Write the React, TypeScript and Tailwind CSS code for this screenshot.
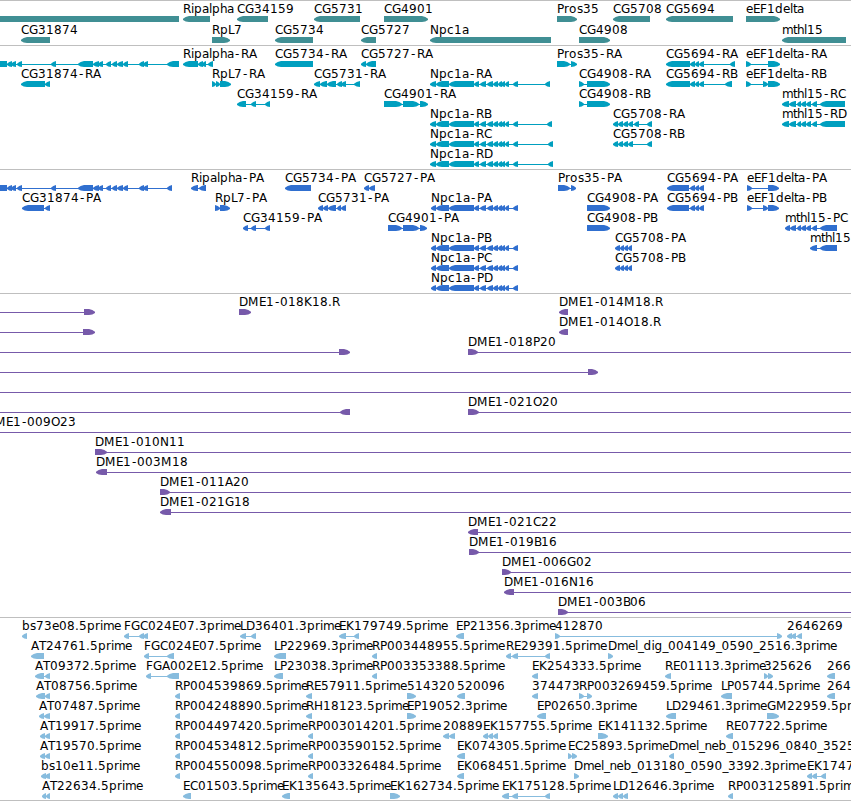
type Segment = [number, number];

interface Feature {
    row: number;
    dir: "L" | "R";
    name: string;
    exons: Segment[];
    // intron line, when it runs past the outermost exons
    line?: Segment;
}

interface Track {
    id: string;
    height: number;
    pitch: number;
    color: string;
    features: Feature[];
}

const WIDTH = 851;

const f = (row: number, dir: "L" | "R", name: string, exons: Segment[], line?: Segment): Feature => ({
    row,
    dir,
    name,
    exons,
    line,
});

// Pixel advances of the label font, digits are 8
const ADVANCE: Record<string, number> = {
    A: 8, B: 7, C: 8, D: 9, E: 7, F: 7, G: 9, H: 9, K: 8, L: 6, M: 11, N: 9, O: 9, P: 7, R: 8, T: 7,
    a: 7, b: 8, c: 7, d: 8, e: 7, g: 8, h: 7, i: 3, l: 3, m: 11, n: 7, o: 8, p: 8, r: 5, s: 6, t: 4,
    "-": 6, ".": 4, _: 5.5,
};

const genes: Feature[] = [
    f(0, "L", "", [[-10, 179]]),
    f(0, "L", "Ripalpha", [[183, 210]]),
    f(0, "L", "CG34159", [[237, 268]]),
    f(0, "L", "CG5731", [[314, 360]]),
    f(0, "R", "CG4901", [[384, 428]]),
    f(0, "R", "Pros35", [[557, 577]]),
    f(0, "L", "CG5708", [[613, 650]]),
    f(0, "L", "CG5694", [[666, 733]]),
    f(0, "R", "eEF1delta", [[746, 780]]),
    f(1, "L", "CG31874", [[21, 50]]),
    f(1, "R", "RpL7", [[212, 230]]),
    f(1, "L", "CG5734", [[275, 313]]),
    f(1, "L", "CG5727", [[361, 376]]),
    f(1, "L", "Npc1a", [[430, 551]]),
    f(1, "R", "CG4908", [[579, 610]]),
    f(1, "L", "mthl15", [[782, 846]]),
];

const leftExons: Segment[] = [
    [-8, 7], [7, 12], [11, 16], [17, 22], [51, 56], [78, 93], [93, 99], [98, 103],
    [106, 111], [112, 117], [117, 123], [123, 128], [139, 144], [143, 148],
];
const npcExons: Segment[] = [
    [436, 449], [449, 474], [474, 479], [480, 486], [487, 493], [493, 498], [498, 502], [501, 505], [505, 509], [513, 518],
];
const cg5708Exons: Segment[] = [[613, 618], [618, 623], [623, 628], [628, 633]];
const mthlExons: Segment[] = [[797, 801], [801, 806], [806, 811], [812, 817]];

const transcripts: Feature[] = [
    f(0, "L", "", [...leftExons, [167, 179]]),
    f(0, "L", "Ripalpha-RA", [[183, 198], [198, 203], [202, 206], [208, 213]]),
    f(0, "L", "CG5734-RA", [[275, 313]]),
    f(0, "L", "CG5727-RA", [[361, 366], [366, 376]]),
    f(0, "R", "Pros35-RA", [[557, 570], [571, 577]]),
    f(0, "L", "CG5694-RA", [[666, 690], [690, 695], [695, 699], [699, 704], [730, 735]]),
    f(0, "R", "eEF1delta-RA", [[746, 751], [768, 780]]),
    f(1, "L", "CG31874-RA", [[21, 45], [45, 50]]),
    f(1, "R", "RpL7-RA", [[212, 216], [216, 220], [220, 231]]),
    f(1, "L", "CG5731-RA", [[314, 320], [320, 327], [327, 336], [337, 342], [341, 346], [354, 360]]),
    f(1, "L", "Npc1a-RA", [[430, 436], ...npcExons, [545, 550]]),
    f(1, "R", "CG4908-RA", [[579, 584], [587, 610]]),
    f(1, "L", "CG5694-RB", [[666, 690], [690, 695], [695, 699], [699, 704], [725, 732]]),
    f(1, "R", "eEF1delta-RB", [[746, 751], [763, 768], [768, 780]]),
    f(2, "L", "CG34159-RA", [[237, 246], [251, 256], [265, 270]]),
    f(2, "R", "CG4901-RA", [[384, 402], [403, 419], [420, 428]]),
    f(2, "R", "CG4908-RB", [[579, 584], [587, 610]]),
    f(2, "L", "mthl15-RC", [[782, 789], [789, 796], ...mthlExons, [820, 845]]),
    f(3, "L", "Npc1a-RB", [[430, 436], ...npcExons, [547, 552]]),
    f(3, "L", "CG5708-RA", [...cg5708Exons, [634, 639], [647, 652]]),
    f(3, "L", "mthl15-RD", [[782, 789], [789, 796], ...mthlExons, [820, 845]]),
    f(4, "L", "Npc1a-RC", [[430, 436], ...npcExons, [548, 553]]),
    f(4, "L", "CG5708-RB", [...cg5708Exons, [647, 652]]),
    f(5, "L", "Npc1a-RD", [[430, 436], ...npcExons, [548, 553]]),
];

const proteins: Feature[] = [
    f(0, "L", "", [...leftExons, [167, 172]]),
    f(0, "L", "Ripalpha-PA", [[191, 198], [199, 206]]),
    f(0, "L", "CG5734-PA", [[285, 311]]),
    f(0, "L", "CG5727-PA", [[364, 369], [369, 375]]),
    f(0, "R", "Pros35-PA", [[558, 570], [571, 576]]),
    f(0, "L", "CG5694-PA", [[667, 689], [690, 695], [695, 699], [699, 704]]),
    f(0, "R", "eEF1delta-PA", [[747, 752], [768, 779]]),
    f(1, "L", "CG31874-PA", [[22, 44], [45, 50]]),
    f(1, "R", "RpL7-PA", [[215, 220], [220, 230]]),
    f(1, "L", "CG5731-PA", [[318, 323], [323, 328], [328, 336], [337, 341], [341, 346]]),
    f(1, "L", "Npc1a-PA", [[431, 436], ...npcExons]),
    f(1, "R", "CG4908-PA", [[587, 610]]),
    f(1, "L", "CG5694-PB", [[667, 689], [690, 695], [695, 699], [699, 704]]),
    f(1, "R", "eEF1delta-PB", [[747, 752], [763, 768], [768, 779]]),
    f(2, "L", "CG34159-PA", [[243, 248], [251, 256], [265, 270]]),
    f(2, "R", "CG4901-PA", [[388, 402], [403, 419], [420, 427]]),
    f(2, "R", "CG4908-PB", [[587, 610]]),
    f(2, "L", "mthl15-PC", [[785, 790], [790, 796], ...mthlExons, [820, 837]]),
    f(3, "L", "Npc1a-PB", [[431, 436], ...npcExons]),
    f(3, "L", "CG5708-PA", [[615, 620], [620, 624], [624, 628], [628, 632]]),
    f(3, "L", "mthl15", [[810, 817], [820, 837]]),
    f(4, "L", "Npc1a-PC", [[431, 436], ...npcExons]),
    f(4, "L", "CG5708-PB", [[615, 620], [620, 624], [624, 628], [628, 632]]),
    f(5, "L", "Npc1a-PD", [[431, 436], ...npcExons]),
];

const clones: Feature[] = [
    f(0, "R", "", [[84, 95]], [0, 84]),
    f(0, "R", "DME1-018K18.R", [[239, 251]]),
    f(0, "L", "DME1-014M18.R", [[559, 568]]),
    f(1, "R", "", [[83, 95]], [0, 84]),
    f(1, "L", "DME1-014O18.R", [[559, 568]]),
    f(2, "R", "", [[339, 350]], [0, 340]),
    f(2, "R", "DME1-018P20", [[468, 478]], [470, WIDTH]),
    f(3, "R", "", [[588, 598]], [0, 590]),
    f(4, "R", "", [], [0, WIDTH]),
    f(5, "L", "", [[340, 350]], [0, 342]),
    f(5, "R", "DME1-021O20", [[468, 479]], [470, WIDTH]),
    f(6, "L", "DME1-009O23", [[-14, -4]], [-4, WIDTH]),
    f(7, "R", "DME1-010N11", [[95, 107]], [96, WIDTH]),
    f(8, "L", "DME1-003M18", [[96, 107]], [98, WIDTH]),
    f(9, "R", "DME1-011A20", [[160, 170]], [162, WIDTH]),
    f(10, "L", "DME1-021G18", [[160, 171]], [162, WIDTH]),
    f(11, "L", "DME1-021C22", [[468, 478]], [470, WIDTH]),
    f(12, "R", "DME1-019B16", [[469, 479]], [470, WIDTH]),
    f(13, "R", "DME1-006G02", [[502, 511]], [504, WIDTH]),
    f(14, "L", "DME1-016N16", [[504, 514]], [506, WIDTH]),
    f(15, "R", "DME1-003B06", [[558, 568]], [560, WIDTH]),
];

const ests: Feature[] = [
    f(0, "L", "bs73e08.5prime", [[22, 27]]),
    f(0, "L", "FGC024E07.3prime", [[124, 129], [139, 144], [143, 148]]),
    f(0, "L", "LD36401.3prime", [[240, 246], [251, 256]]),
    f(0, "L", "EK179749.5prime", [[339, 346], [354, 359]]),
    f(0, "L", "EP21356.3prime", [[456, 464]]),
    f(0, "R", "412870", [[555, 560], [777, 782]]),
    f(0, "L", "2646269", [[787, 792], [791, 796], [797, 802]]),
    f(1, "L", "AT24761.5prime", [[31, 44]]),
    f(1, "L", "FGC024E07.5prime", [[144, 149], [167, 174]]),
    f(1, "L", "LP22969.3prime", [[274, 286]]),
    f(1, "L", "RP003448955.5prime", [[372, 377]]),
    f(1, "L", "RE29391.5prime", [[506, 511], [512, 518], [545, 550]]),
    f(1, "R", "Dmel_dig_004149_0590_2516.3prime", [[608, 613]]),
    f(2, "L", "AT09372.5prime", [[35, 44], [45, 50]]),
    f(2, "L", "FGA002E12.5prime", [[146, 151], [167, 179]]),
    f(2, "L", "LP23038.3prime", [[274, 283]]),
    f(2, "L", "RP003353388.5prime", [[372, 377]]),
    f(2, "L", "EK254333.5prime", [[532, 538]]),
    f(2, "L", "RE01113.3prime", [[665, 671]]),
    f(2, "R", "325626", [[764, 768], [768, 773]]),
    f(2, "L", "266", [[827, 835]]),
    f(3, "L", "AT08756.5prime", [[36, 45], [45, 50]]),
    f(3, "L", "RP004539869.5prime", [[175, 180]]),
    f(3, "L", "RE57911.5prime", [[306, 312]]),
    f(3, "R", "514320", [[407, 416]]),
    f(3, "L", "520096", [[457, 465]]),
    f(3, "L", "374473", [[532, 538]]),
    f(3, "R", "RP003269459.5prime", [[579, 584], [587, 592]]),
    f(3, "L", "LP05744.5prime", [[721, 732]]),
    f(3, "L", "264", [[827, 835]]),
    f(4, "L", "AT07487.5prime", [[39, 44], [44, 50]]),
    f(4, "L", "RP004248890.5prime", [[175, 180]]),
    f(4, "L", "RH18123.5prime", [[306, 312]]),
    f(4, "R", "EP19052.3prime", [[407, 416]]),
    f(4, "L", "EP02650.3prime", [[537, 546]]),
    f(4, "L", "LD29461.3prime", [[666, 676]]),
    f(4, "R", "GM22959.5prime", [[767, 779]]),
    f(5, "L", "AT19917.5prime", [[40, 45], [45, 50]]),
    f(5, "L", "RP004497420.5prime", [[175, 180]]),
    f(5, "L", "RP003014201.5prime", [[308, 313]]),
    f(5, "L", "20889", [[443, 449], [449, 455]]),
    f(5, "L", "EK157755.5prime", [[483, 488], [488, 493], [493, 498]]),
    f(5, "R", "EK141132.5prime", [[598, 608]]),
    f(5, "L", "RE07722.5prime", [[726, 733]]),
    f(6, "L", "AT19570.5prime", [[40, 45], [45, 50]]),
    f(6, "L", "RP004534812.5prime", [[175, 180]]),
    f(6, "L", "RP003590152.5prime", [[308, 313]]),
    f(6, "L", "EK074305.5prime", [[457, 465]]),
    f(6, "R", "EC25893.5prime", [[568, 572], [572, 577]]),
    f(6, "L", "Dmel_neb_015296_0840_3525", [[669, 674]]),
    f(7, "L", "bs10e11.5prime", [[41, 46], [45, 50]]),
    f(7, "L", "RP004550098.5prime", [[175, 180]]),
    f(7, "L", "RP003326484.5prime", [[308, 313]]),
    f(7, "L", "EK068451.5prime", [[457, 464]]),
    f(7, "R", "Dmel_neb_013180_0590_3392.3prime", [[574, 579]]),
    f(7, "L", "EK1747", [[807, 812], [812, 817], [821, 826]]),
    f(8, "L", "AT22634.5prime", [[42, 46], [46, 50]]),
    f(8, "L", "EC01503.5prime", [[183, 191]]),
    f(8, "L", "EK135643.5prime", [[282, 290]]),
    f(8, "R", "EK162734.5prime", [[390, 400]]),
    f(8, "L", "EK175128.5prime", [[502, 509], [512, 518], [545, 550]]),
    f(8, "L", "LD12646.3prime", [[613, 618], [618, 623], [623, 628]]),
    f(8, "L", "RP003125891.5prime", [[728, 733]]),
];

const tracks: Track[] = [
    { id: "genes", height: 44, pitch: 21, color: "#408f94", features: genes },
    { id: "transcripts", height: 123, pitch: 20, color: "#009fbf", features: transcripts },
    { id: "proteins", height: 123, pitch: 20, color: "#306fcf", features: proteins },
    { id: "clones", height: 323, pitch: 20, color: "#775aaa", features: clones },
    { id: "ests", height: 182, pitch: 20, color: "#87bcde", features: ests },
];

function glyphPositions(text: string, start: number) {
    let x = start;
    return [...text]
        .map((ch, i) => {
            // hyphens sit in the middle of their cell, one pixel wider before a letter
            const beforeLetter = ch === "-" && /[A-Z]/.test(text[i + 1] ?? "");
            const at = ch === "-" ? x + 1 : x;
            x += (ADVANCE[ch] ?? 8) + (beforeLetter ? 1 : 0);
            return at;
        })
        .join(" ");
}

function arrowPoints([x1, x2]: Segment, dir: "L" | "R", top: number) {
    const head = Math.min(6, x2 - x1);
    const [tip, end, sign] = dir === "L" ? [x1, x2, 1] : [x2, x1, -1];
    const shoulder = tip + sign * head;
    const half = tip + sign * head * 0.45;
    return [
        [tip, top + 2.8],
        [half, top + 1],
        [shoulder, top],
        [end, top],
        [end, top + 6],
        [shoulder, top + 6],
        [half, top + 5.4],
        [tip, top + 4],
    ]
        .map((p) => p.join(","))
        .join(" ");
}

function FeatureGlyph({ feature, pitch }: { feature: Feature; pitch: number }) {
    const { row, dir, name, exons, line } = feature;
    const y = row * pitch;
    const [from, to] = line ?? [exons[0][0], exons[exons.length - 1][1]];

    return (
        <g>
            <rect x={from} y={y + 18} width={to - from} height={1} />
            {exons.map((exon, i) => (
                <polygon key={i} points={arrowPoints(exon, dir, y + 15)} />
            ))}
            {name && (
                <text x={glyphPositions(name, exons[0][0])} y={y + 12} className="fill-black">
                    {name}
                </text>
            )}
        </g>
    );
}

export default function App() {
    return (
        <main className="flex h-[801px] w-[851px] flex-col overflow-hidden border-b border-[#bfbfbf] bg-white">
            {tracks.map((track) => (
                <section key={track.id} className="shrink-0 border-t border-[#bfbfbf]">
                    <svg
                        width={WIDTH}
                        height={track.height}
                        fill={track.color}
                        className="block font-['DejaVu_Sans',sans-serif] text-[12px]"
                    >
                        {track.features.map((feature, i) => (
                            <FeatureGlyph key={i} feature={feature} pitch={track.pitch} />
                        ))}
                    </svg>
                </section>
            ))}
        </main>
    );
}
